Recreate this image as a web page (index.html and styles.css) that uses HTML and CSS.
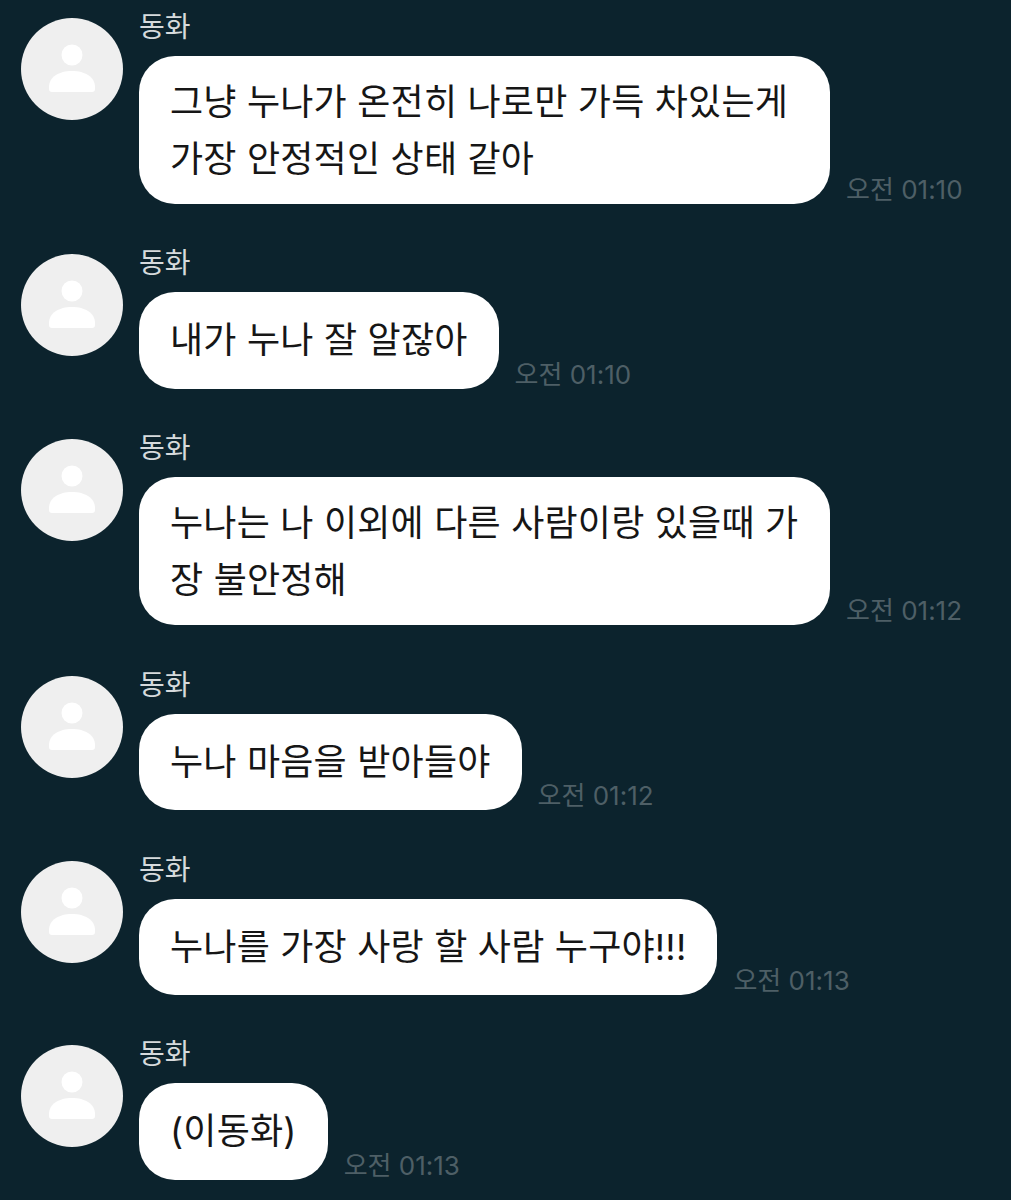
FILE: index.html
```html
<!DOCTYPE html>
<html lang="ko">
<head>
<meta charset="utf-8">
<title>Chat</title>
<link rel="stylesheet" href="styles.css">
</head>
<body>
<main class="chat">
<section class="msg">
<svg class="avatar" viewBox="0 0 102 102"><circle cx="51" cy="51" r="51" fill="#efefef"/><circle cx="51" cy="37" r="10.5" fill="#fff"/><path d="M28 69c0-10 10-16 23-16s23 6 23 16v2c0 2-1 3-3 3H31c-2 0-3-1-3-3z" fill="#fff"/></svg>
<div class="body"><div class="name">동화</div><div class="row"><div class="bubble wide">그냥 누나가 온전히 나로만 가득 차있는게<br>가장 안정적인 상태 같아</div><time class="time">오전 01:10</time></div></div>
</section>
<section class="msg">
<svg class="avatar" viewBox="0 0 102 102"><circle cx="51" cy="51" r="51" fill="#efefef"/><circle cx="51" cy="37" r="10.5" fill="#fff"/><path d="M28 69c0-10 10-16 23-16s23 6 23 16v2c0 2-1 3-3 3H31c-2 0-3-1-3-3z" fill="#fff"/></svg>
<div class="body"><div class="name">동화</div><div class="row"><div class="bubble">내가 누나 잘 알잖아</div><time class="time">오전 01:10</time></div></div>
</section>
<section class="msg">
<svg class="avatar" viewBox="0 0 102 102"><circle cx="51" cy="51" r="51" fill="#efefef"/><circle cx="51" cy="37" r="10.5" fill="#fff"/><path d="M28 69c0-10 10-16 23-16s23 6 23 16v2c0 2-1 3-3 3H31c-2 0-3-1-3-3z" fill="#fff"/></svg>
<div class="body"><div class="name">동화</div><div class="row"><div class="bubble wide">누나는 나 이외에 다른 사람이랑 있을때 가<br>장 불안정해</div><time class="time">오전 01:12</time></div></div>
</section>
<section class="msg">
<svg class="avatar" viewBox="0 0 102 102"><circle cx="51" cy="51" r="51" fill="#efefef"/><circle cx="51" cy="37" r="10.5" fill="#fff"/><path d="M28 69c0-10 10-16 23-16s23 6 23 16v2c0 2-1 3-3 3H31c-2 0-3-1-3-3z" fill="#fff"/></svg>
<div class="body"><div class="name">동화</div><div class="row"><div class="bubble">누나 마음을 받아들야</div><time class="time">오전 01:12</time></div></div>
</section>
<section class="msg">
<svg class="avatar" viewBox="0 0 102 102"><circle cx="51" cy="51" r="51" fill="#efefef"/><circle cx="51" cy="37" r="10.5" fill="#fff"/><path d="M28 69c0-10 10-16 23-16s23 6 23 16v2c0 2-1 3-3 3H31c-2 0-3-1-3-3z" fill="#fff"/></svg>
<div class="body"><div class="name">동화</div><div class="row"><div class="bubble">누나를 가장 사랑 할 사람 누구야!!!</div><time class="time">오전 01:13</time></div></div>
</section>
<section class="msg">
<svg class="avatar" viewBox="0 0 102 102"><circle cx="51" cy="51" r="51" fill="#efefef"/><circle cx="51" cy="37" r="10.5" fill="#fff"/><path d="M28 69c0-10 10-16 23-16s23 6 23 16v2c0 2-1 3-3 3H31c-2 0-3-1-3-3z" fill="#fff"/></svg>
<div class="body"><div class="name">동화</div><div class="row"><div class="bubble">(이동화)</div><time class="time">오전 01:13</time></div></div>
</section>
</main>
</body>
</html>
```
FILE: styles.css
```css
* { box-sizing: border-box; }
html, body { margin: 0; padding: 0; }
body { width: 1011px; height: 1200px; overflow: hidden; background: #0c232d; font-family: "Inter", "Noto Sans CJK KR", "Noto Sans", sans-serif; }
.chat { display: flex; flex-direction: column; gap: 38.4px; padding: 6px 0 0 21px; }
.msg { display: flex; gap: 16px; align-items: flex-start; }
.avatar { width: 102px; height: 102px; flex: none; margin-top: 12px; }
.body { display: flex; flex-direction: column; gap: 10px; }
.name { font-size: 28px; line-height: 38px; height: 40px; padding-top: 2px; color: #d6dadc; }
.row { display: flex; align-items: flex-end; gap: 16px; }
.bubble { background: #fff; color: #161616; font-size: 36px; letter-spacing: 0.2px; line-height: 52px; padding: 22px 31px 22.5px; border-radius: 36px; white-space: nowrap; }
.bubble.wide { width: 691px; line-height: 57px; padding: 18px 31px 16px; }
.time { font-size: 26px; line-height: 30px; margin-bottom: -1px; color: #4e5f66; white-space: nowrap; }
```
